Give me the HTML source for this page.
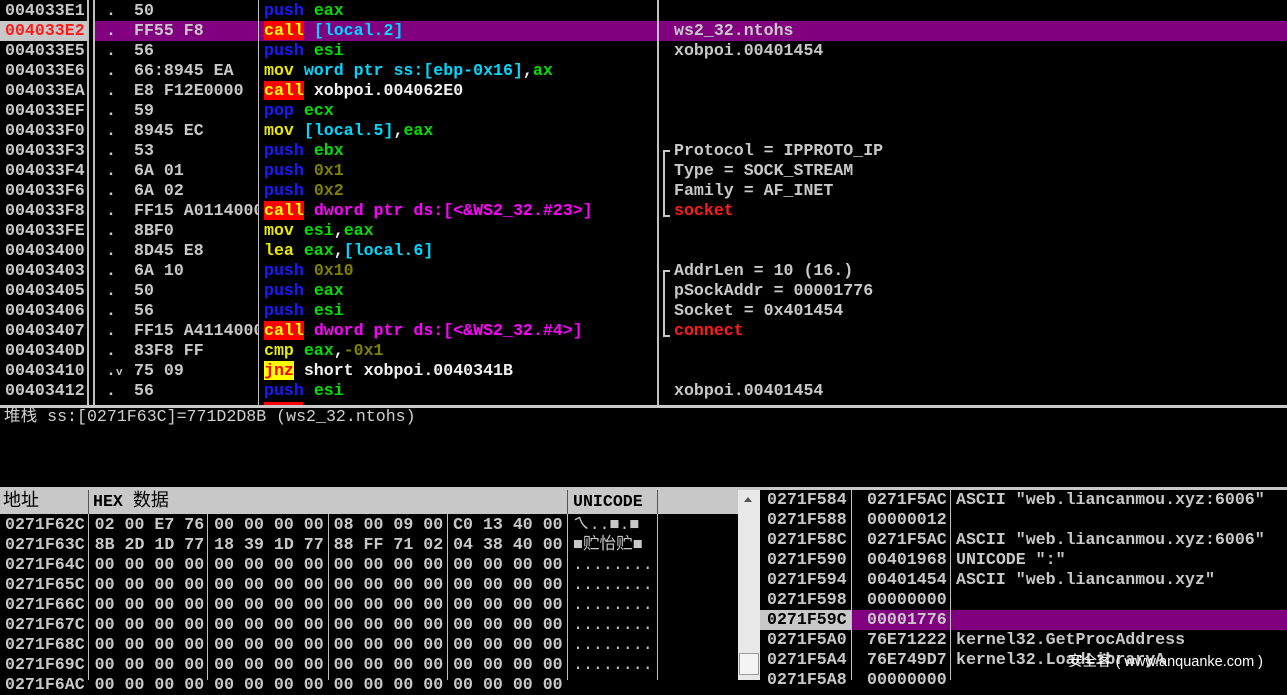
<!DOCTYPE html>
<html><head><meta charset="utf-8"><style>
*{margin:0;padding:0}
body{width:1287px;height:680px;background:#000;position:relative;overflow:hidden;font-family:"Liberation Mono","Noto Sans CJK SC",monospace;font-size:16.6px;font-weight:bold;color:#c8c8c8}
.r{position:absolute;height:20px;line-height:20px;white-space:pre}
.a{left:5px}
.d{left:106px}
.h{left:134px;width:124px;overflow:hidden}
.x{left:264px}
.c{left:674px}
.vl{position:absolute;background:#c0c0c0;width:2px}
.pu{color:#1a1aff}.g{color:#00e000}.y{color:#e8e800}.cy{color:#00d8ff}.o{color:#808000}.m{color:#ff00ff}.w{color:#f0f0f0}.rd{color:#ff1a1a}
.cl{background:#ff0000;color:#ffff00}
.jz{background:#ffff00;color:#ff0000}
.br{position:absolute;left:663px;width:5px;border-left:2px solid #c8c8c8;border-top:2px solid #c8c8c8;border-bottom:2px solid #c8c8c8}
</style></head><body>
<div style="position:absolute;left:0;top:21px;width:87px;height:20px;background:#c8c8c8"></div>
<div style="position:absolute;left:95px;top:21px;width:1192px;height:20px;background:#800080"></div>
<div class="vl" style="left:87px;top:0;height:405px"></div>
<div class="vl" style="left:93px;top:0;height:405px"></div>
<div class="vl" style="left:258px;top:0;height:405px;width:1px"></div>
<div class="vl" style="left:657px;top:0;height:405px"></div>

<div class="r a" style="top:1px">004033E1</div><div class="r d" style="top:1px">.</div><div class="r h" style="top:1px">50</div><div class="r x" style="top:1px"><span class="pu">push</span> <span class="g">eax</span></div>
<div class="r a" style="top:21px;color:#ff1a1a">004033E2</div><div class="r d" style="top:21px">.</div><div class="r h" style="top:21px">FF55 F8</div><div class="r x" style="top:21px"><span class="cl">call</span> <span class="cy">[local.2]</span></div><div class="r c" style="top:21px">ws2_32.ntohs</div>
<div class="r a" style="top:41px">004033E5</div><div class="r d" style="top:41px">.</div><div class="r h" style="top:41px">56</div><div class="r x" style="top:41px"><span class="pu">push</span> <span class="g">esi</span></div><div class="r c" style="top:41px">xobpoi.00401454</div>
<div class="r a" style="top:61px">004033E6</div><div class="r d" style="top:61px">.</div><div class="r h" style="top:61px">66:8945 EA</div><div class="r x" style="top:61px"><span class="y">mov</span> <span class="cy">word ptr ss:[ebp-0x16]</span><span class="w">,</span><span class="g">ax</span></div>
<div class="r a" style="top:81px">004033EA</div><div class="r d" style="top:81px">.</div><div class="r h" style="top:81px">E8 F12E0000</div><div class="r x" style="top:81px"><span class="cl">call</span> <span class="w">xobpoi.004062E0</span></div>
<div class="r a" style="top:101px">004033EF</div><div class="r d" style="top:101px">.</div><div class="r h" style="top:101px">59</div><div class="r x" style="top:101px"><span class="pu">pop</span> <span class="g">ecx</span></div>
<div class="r a" style="top:121px">004033F0</div><div class="r d" style="top:121px">.</div><div class="r h" style="top:121px">8945 EC</div><div class="r x" style="top:121px"><span class="y">mov</span> <span class="cy">[local.5]</span><span class="w">,</span><span class="g">eax</span></div>
<div class="r a" style="top:141px">004033F3</div><div class="r d" style="top:141px">.</div><div class="r h" style="top:141px">53</div><div class="r x" style="top:141px"><span class="pu">push</span> <span class="g">ebx</span></div><div class="r c" style="top:141px">Protocol = IPPROTO_IP</div>
<div class="r a" style="top:161px">004033F4</div><div class="r d" style="top:161px">.</div><div class="r h" style="top:161px">6A 01</div><div class="r x" style="top:161px"><span class="pu">push</span> <span class="o">0x1</span></div><div class="r c" style="top:161px">Type = SOCK_STREAM</div>
<div class="r a" style="top:181px">004033F6</div><div class="r d" style="top:181px">.</div><div class="r h" style="top:181px">6A 02</div><div class="r x" style="top:181px"><span class="pu">push</span> <span class="o">0x2</span></div><div class="r c" style="top:181px">Family = AF_INET</div>
<div class="r a" style="top:201px">004033F8</div><div class="r d" style="top:201px">.</div><div class="r h" style="top:201px">FF15 A0114000</div><div class="r x" style="top:201px"><span class="cl">call</span> <span class="m">dword ptr ds:[&lt;&amp;WS2_32.#23&gt;]</span></div><div class="r c rd" style="top:201px">socket</div>
<div class="r a" style="top:221px">004033FE</div><div class="r d" style="top:221px">.</div><div class="r h" style="top:221px">8BF0</div><div class="r x" style="top:221px"><span class="y">mov</span> <span class="g">esi</span><span class="w">,</span><span class="g">eax</span></div>
<div class="r a" style="top:241px">00403400</div><div class="r d" style="top:241px">.</div><div class="r h" style="top:241px">8D45 E8</div><div class="r x" style="top:241px"><span class="y">lea</span> <span class="g">eax</span><span class="w">,</span><span class="cy">[local.6]</span></div>
<div class="r a" style="top:261px">00403403</div><div class="r d" style="top:261px">.</div><div class="r h" style="top:261px">6A 10</div><div class="r x" style="top:261px"><span class="pu">push</span> <span class="o">0x10</span></div><div class="r c" style="top:261px">AddrLen = 10 (16.)</div>
<div class="r a" style="top:281px">00403405</div><div class="r d" style="top:281px">.</div><div class="r h" style="top:281px">50</div><div class="r x" style="top:281px"><span class="pu">push</span> <span class="g">eax</span></div><div class="r c" style="top:281px">pSockAddr = 00001776</div>
<div class="r a" style="top:301px">00403406</div><div class="r d" style="top:301px">.</div><div class="r h" style="top:301px">56</div><div class="r x" style="top:301px"><span class="pu">push</span> <span class="g">esi</span></div><div class="r c" style="top:301px">Socket = 0x401454</div>
<div class="r a" style="top:321px">00403407</div><div class="r d" style="top:321px">.</div><div class="r h" style="top:321px">FF15 A4114000</div><div class="r x" style="top:321px"><span class="cl">call</span> <span class="m">dword ptr ds:[&lt;&amp;WS2_32.#4&gt;]</span></div><div class="r c rd" style="top:321px">connect</div>
<div class="r a" style="top:341px">0040340D</div><div class="r d" style="top:341px">.</div><div class="r h" style="top:341px">83F8 FF</div><div class="r x" style="top:341px"><span class="y">cmp</span> <span class="g">eax</span><span class="w">,</span><span class="o">-0x1</span></div>
<div class="r a" style="top:361px">00403410</div><div class="r d" style="top:361px">.<span style="font-size:11px">v</span></div><div class="r h" style="top:361px">75 09</div><div class="r x" style="top:361px"><span class="jz">jnz</span> <span class="w">short xobpoi.0040341B</span></div>
<div class="r a" style="top:381px">00403412</div><div class="r d" style="top:381px">.</div><div class="r h" style="top:381px">56</div><div class="r x" style="top:381px"><span class="pu">push</span> <span class="g">esi</span></div><div class="r c" style="top:381px">xobpoi.00401454</div>
<div style="position:absolute;left:264px;top:402px;width:39px;height:4px;background:#f00"></div>
<div class="br" style="top:150px;height:63px"></div>
<div class="br" style="top:270px;height:63px"></div>

<div style="position:absolute;left:0;top:405px;width:1287px;height:3px;background:#c8c8c8"></div>
<div class="r" style="left:4px;top:407px;font-weight:normal;color:#d0d0d0">堆栈 ss:[0271F63C]=771D2D8B (ws2_32.ntohs)</div>
<div style="position:absolute;left:0;top:487px;width:1287px;height:3px;background:#c8c8c8"></div>

<div style="position:absolute;left:0;top:490px;width:760px;height:24px;background:#c8c8c8"></div>
<div style="position:absolute;left:88px;top:490px;width:1px;height:24px;background:#555"></div>
<div style="position:absolute;left:567px;top:490px;width:1px;height:24px;background:#555"></div>
<div style="position:absolute;left:657px;top:490px;width:1px;height:24px;background:#555"></div>
<div class="r" style="left:3px;top:492px;color:#000;font-weight:normal;font-size:18px">地址</div>
<div class="r" style="left:93px;top:492px;color:#000"><span>HEX</span> <span style="font-weight:normal;font-size:18px">数据</span></div>
<div class="r" style="left:573px;top:492px;color:#000">UNICODE</div>
<div style="position:absolute;left:738px;top:490px;width:22px;height:190px;background:#e8e8e8"></div>
<div style="position:absolute;left:744px;top:497px;width:0;height:0;border-left:4px solid transparent;border-right:4px solid transparent;border-bottom:5px solid #555"></div>
<div style="position:absolute;left:739px;top:653px;width:18px;height:20px;background:#f4f4f4;border:1px solid #999"></div>
<div style="position:absolute;left:0;top:514px;width:738px;height:166px;background:#000"></div>
<div class="vl" style="left:88px;top:514px;height:166px;width:1px"></div>
<div class="vl" style="left:207px;top:514px;height:166px;width:1px"></div>
<div class="vl" style="left:328px;top:514px;height:166px;width:1px"></div>
<div class="vl" style="left:447px;top:514px;height:166px;width:1px"></div>
<div class="vl" style="left:567px;top:514px;height:166px;width:1px"></div>
<div class="vl" style="left:657px;top:514px;height:166px;width:1px"></div>
<div class="r" style="left:5px;top:515px;line-height:20px;height:170px">0271F62C 02 00 E7 76 00 00 00 00 08 00 09 00 C0 13 40 00
0271F63C 8B 2D 1D 77 18 39 1D 77 88 FF 71 02 04 38 40 00
0271F64C 00 00 00 00 00 00 00 00 00 00 00 00 00 00 00 00
0271F65C 00 00 00 00 00 00 00 00 00 00 00 00 00 00 00 00
0271F66C 00 00 00 00 00 00 00 00 00 00 00 00 00 00 00 00
0271F67C 00 00 00 00 00 00 00 00 00 00 00 00 00 00 00 00
0271F68C 00 00 00 00 00 00 00 00 00 00 00 00 00 00 00 00
0271F69C 00 00 00 00 00 00 00 00 00 00 00 00 00 00 00 00
0271F6AC 00 00 00 00 00 00 00 00 00 00 00 00 00 00 00 00</div>
<div class="r" style="left:573px;top:515px;width:84px;overflow:hidden;height:170px;font-weight:normal">ㄟ..■.■
■贮怡贮■
........
........
........
........
........
........
........</div>

<div style="position:absolute;left:760px;top:490px;width:527px;height:190px;background:#000"></div>
<div style="position:absolute;left:760px;top:610px;width:91px;height:20px;background:#c8c8c8"></div>
<div style="position:absolute;left:851px;top:610px;width:436px;height:20px;background:#800080"></div>
<div class="vl" style="left:851px;top:490px;height:190px;width:1px"></div>
<div class="vl" style="left:950px;top:490px;height:190px;width:1px"></div>
<div class="r" style="left:767px;top:490px;height:200px">0271F584
0271F588
0271F58C
0271F590
0271F594
0271F598
<span style="color:#000">0271F59C</span>
0271F5A0
0271F5A4
0271F5A8</div>
<div class="r" style="left:867px;top:490px;height:200px">0271F5AC
00000012
0271F5AC
00401968
00401454
00000000
00001776
76E71222
76E749D7
00000000</div>
<div class="r" style="left:956px;top:490px;height:200px">ASCII "web.liancanmou.xyz:6006"

ASCII "web.liancanmou.xyz:6006"
UNICODE ":"
ASCII "web.liancanmou.xyz"


kernel32.GetProcAddress
kernel32.LoadLibraryA</div>
<div style="position:absolute;left:1068px;top:650px;font-family:'Liberation Sans','Noto Sans CJK SC',sans-serif;font-size:14.5px;font-weight:normal;color:#fff;white-space:pre">安全客 ( www.anquanke.com )</div>
</body></html>
